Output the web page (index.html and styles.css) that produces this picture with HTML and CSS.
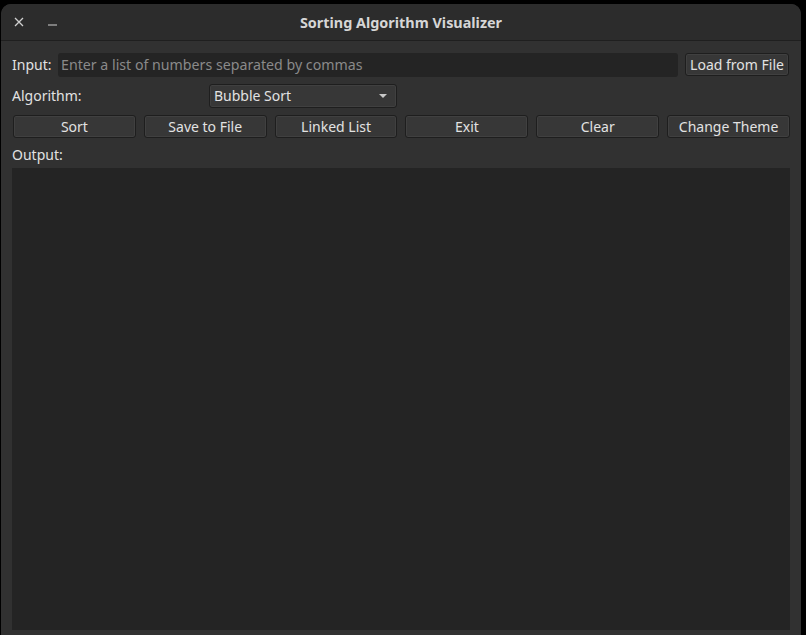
FILE: index.html
```html
<!DOCTYPE html>
<html>
<head>
<meta charset="utf-8">
<link rel="stylesheet" href="styles.css">
</head>
<body>
<div class="window">
  <div class="titlebar">
    <div class="tb-controls">
      <svg class="tb-close" width="10" height="10" viewBox="0 0 10 10"><path d="M1 1L9 9M9 1L1 9" stroke="#d0d0d0" stroke-width="1.3"/></svg>
      <svg class="tb-min" width="9" height="2" viewBox="0 0 9 2"><path d="M0 1H9" stroke="#d0d0d0" stroke-width="1.2"/></svg>
    </div>
    <div class="tb-title">Sorting Algorithm Visualizer</div>
  </div>
  <div class="content">
    <div class="row row-input">
      <span class="label">Input:</span>
      <div class="field"><span class="placeholder">Enter a list of numbers separated by commas</span></div>
      <div class="btn btn-load">Load from File</div>
    </div>
    <div class="row row-algo">
      <span class="label label-algo">Algorithm:</span>
      <div class="combo"><span>Bubble Sort</span><svg width="8" height="4" viewBox="0 0 8 4"><path d="M0 0H8L4 4Z" fill="#c8c8c8"/></svg></div>
    </div>
    <div class="row row-buttons">
      <div class="btn">Sort</div>
      <div class="btn">Save to File</div>
      <div class="btn">Linked List</div>
      <div class="btn">Exit</div>
      <div class="btn">Clear</div>
      <div class="btn">Change Theme</div>
    </div>
    <div class="label label-output">Output:</div>
    <div class="output"></div>
  </div>
</div>
</body>
</html>
```
FILE: styles.css
```css
html, body {
  margin: 0;
  padding: 0;
  background: #000;
  width: 806px;
  height: 635px;
  overflow: hidden;
  font-family: "Noto Sans", "DejaVu Sans", sans-serif;
  font-size: 14px;
  color: #e2e2e2;
}
.window {
  margin: 4px 0 0 1px;
  width: 800px;
  height: 640px;
  background: #313131;
  border-radius: 10px 10px 0 0;
  display: flex;
  flex-direction: column;
  overflow: hidden;
}
.titlebar {
  height: 36px;
  background: #2c2c2c;
  border-bottom: 1px solid #1f1f1f;
  display: flex;
  align-items: center;
  position: relative;
  flex: none;
}
.tb-controls {
  display: flex;
  align-items: center;
  padding-left: 13px;
}
.tb-min { margin-left: 24px; margin-top: 5px; }
.tb-title {
  position: absolute;
  left: 0;
  right: 0;
  text-align: center;
  font-weight: bold;
  color: #d6d6d6;
  font-size: 14.4px;
  top: 9px;
}
.content {
  flex: 1;
  display: flex;
  flex-direction: column;
  padding: 11px 11px 0 11px;
}
.row {
  display: flex;
  align-items: center;
}
.row-input {
  height: 25px;
}
.label {
  color: #e2e2e2;
  white-space: nowrap;
}
.row-input .label {
  width: 46px;
}
.field {
  width: 620px;
  height: 24px;
  background: #242424;
  border-radius: 3px;
  display: flex;
  align-items: center;
  padding-left: 3px;
  box-sizing: border-box;
}
.placeholder { color: #8a8a8a; font-size: 14.2px; }
.btn {
  height: 23px;
  box-sizing: border-box;
  background: #373737;
  border: 1px solid #1e1e1e;
  border-radius: 3px;
  box-shadow: inset 0 0 0 1px #404040;
  display: flex;
  align-items: center;
  justify-content: center;
  white-space: nowrap;
  color: #e2e2e2;
}
.btn-load {
  margin-left: 7px;
  width: 104px;
}
.row-algo {
  margin-top: 7px;
  height: 23px;
}
.label-algo { width: 197px; }
.combo {
  width: 188px;
  height: 24px;
  box-sizing: border-box;
  background: #373737;
  border: 1px solid #1e1e1e;
  border-radius: 3px;
  box-shadow: inset 0 0 0 1px #404040;
  display: flex;
  align-items: center;
  justify-content: space-between;
  padding: 0 9px 0 4px;
}
.row-buttons {
  margin-top: 8px;
  gap: 8px;
  padding-left: 1px;
}
.row-buttons .btn {
  width: 123px;
}
.label-output {
  margin-top: 7px;
  height: 23px;
  line-height: 20px;
}
.output {
  width: 778px;
  height: 462px;
  background: #242424;
}
```
